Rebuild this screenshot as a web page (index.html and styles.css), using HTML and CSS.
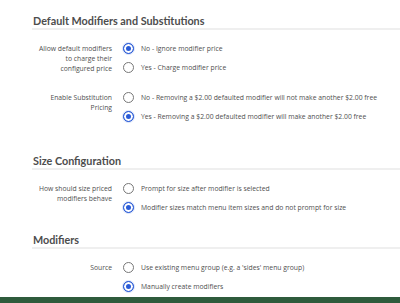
FILE: index.html
```html
<!DOCTYPE html>
<html lang="en">
<head>
  <meta charset="UTF-8" />
  <title>Modifier Settings</title>
  <link rel="stylesheet" href="styles.css">
</head>
<body>
  <div class="page">
    <!-- Default Modifiers -->
    <section class="section first">
      <h2 class="section-title">Default Modifiers and Substitutions</h2>
      <div class="field">
        <div class="field-label">Allow default modifiers to charge their configured price</div>
        <div class="options">
          <label class="option"><input type="radio" name="charge" checked> No - Ignore modifier price</label>
          <label class="option"><input type="radio" name="charge"> Yes - Charge modifier price</label>
        </div>
      </div>
      <div class="field">
        <div class="field-label">Enable Substitution Pricing</div>
        <div class="options">
          <label class="option"><input type="radio" name="subst"> No - Removing a $2.00 defaulted modifier will not make another $2.00 free</label>
          <label class="option"><input type="radio" name="subst" checked> Yes - Removing a $2.00 defaulted modifier will make another $2.00 free</label>
        </div>
      </div>
    </section>

    <!-- Size Configuration -->
    <section class="section sizes">
      <h2 class="section-title">Size Configuration</h2>
      <div class="field">
        <div class="field-label">How should size priced modifiers behave</div>
        <div class="options">
          <label class="option"><input type="radio" name="size"> Prompt for size after modifier is selected</label>
          <label class="option"><input type="radio" name="size" checked> Modifier sizes match menu item sizes and do not prompt for size</label>
        </div>
      </div>
    </section>

    <!-- Modifiers -->
    <section class="section mods">
      <h2 class="section-title">Modifiers</h2>
      <div class="field">
        <div class="field-label">Source</div>
        <div class="options">
          <label class="option"><input type="radio" name="source"> Use existing menu group (e.g. a 'sides' menu group)</label>
          <label class="option"><input type="radio" name="source" checked> Manually create modifiers</label>
        </div>
      </div>
    </section>
  </div>
  <div class="footer-bar"></div>
</body>
</html>
```

FILE: styles.css
```css
body {
  margin: 0;
  font-family: "Open Sans", Lato, sans-serif;
  color: #4a4a4a;
  background: #fff;
  height: 303px;
  overflow: hidden;
  position: relative;
}
.page {
  padding-left: 32px;
}
.section.first {
  margin-top: 13px;
}
.section.sizes {
  margin-top: 27px;
}
.section.mods {
  margin-top: 15px;
}
.section-title {
  margin: 0;
  font-family: Lato, sans-serif;
  font-size: 10.8px;
  font-weight: 700;
  line-height: 15px;
  padding-left: 1px;
  color: #4d4d4d;
  border-bottom: 2px solid #efefef;
}
.field {
  display: flex;
  margin-top: 9px;
}
.field + .field {
  margin-top: 11px;
}
.field-label {
  width: 80px;
  text-align: right;
  font-size: 6.8px;
  line-height: 10px;
  padding-top: 5px;
  color: #4f4f4f;
}
.options {
  margin-left: 11px;
  display: flex;
  flex-direction: column;
}
.option {
  display: flex;
  align-items: center;
  height: 19px;
  font-size: 6.8px;
  color: #4f4f4f;
  white-space: nowrap;
}
.option input {
  appearance: none;
  -webkit-appearance: none;
  width: 11px;
  height: 11px;
  margin: 0 7px 0 0;
  border: 1px solid #777;
  border-radius: 50%;
  background: #fff;
  box-sizing: border-box;
}
.option input:checked {
  border-color: #2a5bd7;
  background: #2a5bd7;
  box-shadow: inset 0 0 0 2px #fff, 0 0 0 1px #dbe4f8;
}
.footer-bar {
  position: absolute;
  left: 0;
  right: 0;
  bottom: 0;
  height: 6px;
  background: #2f5b3c;
}
```
